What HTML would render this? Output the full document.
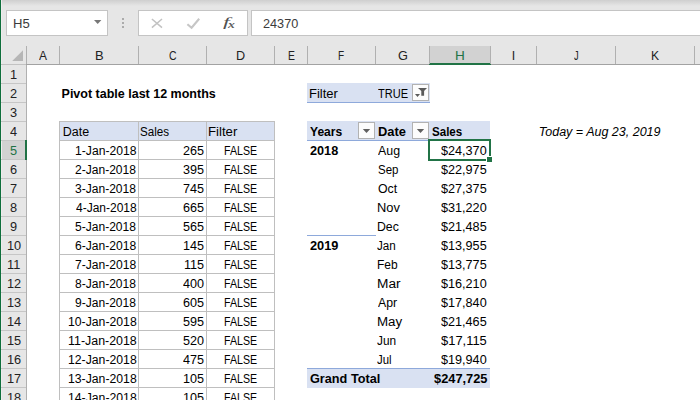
<!DOCTYPE html>
<html><head><meta charset="utf-8"><title>Pivot table last 12 months</title>
<style>
*{margin:0;padding:0;box-sizing:border-box}
html,body{width:700px;height:400px;overflow:hidden;background:#fff}
body{position:relative;font-family:"Liberation Sans",Arial,sans-serif;font-size:12.5px;color:#000;line-height:1}
.a{position:absolute}
.t{position:absolute;white-space:nowrap;line-height:20px;height:20px;transform-origin:0 0}
</style></head>
<body>
<div class="a" style="left:0;top:0;width:700px;height:65px;background:#e6e6e6"></div>
<div class="a" style="left:0;top:0;width:700px;height:6px;background:linear-gradient(#cfcfcf,#e6e6e6)"></div>
<div class="a" style="left:0;top:65px;width:27px;height:335px;background:#e6e6e6"></div>
<div class="a" style="left:0;top:0;width:1px;height:400px;background:#0f6f3c"></div>
<div class="a" style="left:1px;top:0;width:1px;height:400px;background:#efeced"></div>
<div class="a" style="left:6px;top:10px;width:102px;height:26px;background:#fff;border:1px solid #c4c4c4"></div>
<svg class="a" style="left:93px;top:19px" width="10" height="7" viewBox="0 0 10 7"><path d="M1 1 H8.4 L4.7 5 Z" fill="#777"/></svg>
<div class="a" style="left:122px;top:18px;width:2px;height:2px;background:#ababab"></div>
<div class="a" style="left:122px;top:22px;width:2px;height:2px;background:#ababab"></div>
<div class="a" style="left:122px;top:26px;width:2px;height:2px;background:#ababab"></div>
<div class="a" style="left:138px;top:10px;width:110px;height:26px;background:#fff;border:1px solid #c4c4c4"></div>
<svg class="a" style="left:148px;top:15px" width="18" height="16" viewBox="0 0 18 16"><path d="M3.9 4 L14 12.6 M14 4 L3.9 12.6" stroke="#c2c2c2" stroke-width="1.5" fill="none"/></svg>
<svg class="a" style="left:184px;top:15px" width="18" height="16" viewBox="0 0 18 16"><path d="M3.4 9.2 L7.6 12.8 L15.2 3.8" stroke="#c6c6c6" stroke-width="2.1" fill="none"/></svg>
<div class="a" style="left:251px;top:10px;width:460px;height:26px;background:#fff;border:1px solid #c4c4c4"></div>
<div class="a" style="left:429px;top:46px;width:61px;height:17px;background:#d2d2d2"></div>
<div class="a" style="left:1px;top:64px;width:25px;height:1px;background:#c2c2c2"></div>
<div class="a" style="left:26px;top:64px;width:674px;height:1px;background:#a2a2a2"></div>
<div class="a" style="left:429px;top:63px;width:62px;height:2px;background:#217346"></div>
<div class="a" style="left:26px;top:46px;width:1px;height:18px;background:#b0b0b0"></div>
<div class="a" style="left:59px;top:46px;width:1px;height:18px;background:#b0b0b0"></div>
<div class="a" style="left:138px;top:46px;width:1px;height:18px;background:#b0b0b0"></div>
<div class="a" style="left:206px;top:46px;width:1px;height:18px;background:#b0b0b0"></div>
<div class="a" style="left:274px;top:46px;width:1px;height:18px;background:#b0b0b0"></div>
<div class="a" style="left:307px;top:46px;width:1px;height:18px;background:#b0b0b0"></div>
<div class="a" style="left:375px;top:46px;width:1px;height:18px;background:#b0b0b0"></div>
<div class="a" style="left:429px;top:46px;width:1px;height:18px;background:#b0b0b0"></div>
<div class="a" style="left:490px;top:46px;width:1px;height:18px;background:#b0b0b0"></div>
<div class="a" style="left:536px;top:46px;width:1px;height:18px;background:#b0b0b0"></div>
<div class="a" style="left:615px;top:46px;width:1px;height:18px;background:#b0b0b0"></div>
<div class="a" style="left:694px;top:46px;width:1px;height:18px;background:#b0b0b0"></div>
<svg class="a" style="left:11px;top:49px" width="13" height="13" viewBox="0 0 13 13"><path d="M12 1.3 L12 12 L1.2 12 Z" fill="#b6b6b6"/></svg>
<div class="a" style="left:26px;top:65px;width:1px;height:335px;background:#b0b0b0"></div>
<div class="a" style="left:1px;top:83px;width:25px;height:1px;background:#c6c6c6"></div>
<div class="a" style="left:1px;top:102px;width:25px;height:1px;background:#c6c6c6"></div>
<div class="a" style="left:1px;top:121px;width:25px;height:1px;background:#c6c6c6"></div>
<div class="a" style="left:1px;top:140px;width:25px;height:1px;background:#c6c6c6"></div>
<div class="a" style="left:1px;top:159px;width:25px;height:1px;background:#c6c6c6"></div>
<div class="a" style="left:2px;top:141px;width:24px;height:18px;background:#d2d2d2"></div>
<div class="a" style="left:25px;top:140px;width:2px;height:20px;background:#217346"></div>
<div class="a" style="left:1px;top:178px;width:25px;height:1px;background:#c6c6c6"></div>
<div class="a" style="left:1px;top:197px;width:25px;height:1px;background:#c6c6c6"></div>
<div class="a" style="left:1px;top:216px;width:25px;height:1px;background:#c6c6c6"></div>
<div class="a" style="left:1px;top:235px;width:25px;height:1px;background:#c6c6c6"></div>
<div class="a" style="left:1px;top:254px;width:25px;height:1px;background:#c6c6c6"></div>
<div class="a" style="left:1px;top:273px;width:25px;height:1px;background:#c6c6c6"></div>
<div class="a" style="left:1px;top:292px;width:25px;height:1px;background:#c6c6c6"></div>
<div class="a" style="left:1px;top:311px;width:25px;height:1px;background:#c6c6c6"></div>
<div class="a" style="left:1px;top:330px;width:25px;height:1px;background:#c6c6c6"></div>
<div class="a" style="left:1px;top:349px;width:25px;height:1px;background:#c6c6c6"></div>
<div class="a" style="left:1px;top:368px;width:25px;height:1px;background:#c6c6c6"></div>
<div class="a" style="left:1px;top:387px;width:25px;height:1px;background:#c6c6c6"></div>
<div class="a" style="left:1px;top:406px;width:25px;height:1px;background:#c6c6c6"></div>
<div class="a" style="left:60px;top:122px;width:214px;height:18px;background:#d9e1f2"></div>
<div class="a" style="left:59px;top:121px;width:1px;height:279px;background:#bfbfbf"></div>
<div class="a" style="left:138px;top:121px;width:1px;height:279px;background:#bfbfbf"></div>
<div class="a" style="left:206px;top:121px;width:1px;height:279px;background:#bfbfbf"></div>
<div class="a" style="left:274px;top:121px;width:1px;height:279px;background:#bfbfbf"></div>
<div class="a" style="left:59px;top:121px;width:216px;height:1px;background:#bfbfbf"></div>
<div class="a" style="left:59px;top:140px;width:216px;height:1px;background:#bfbfbf"></div>
<div class="a" style="left:59px;top:159px;width:216px;height:1px;background:#bfbfbf"></div>
<div class="a" style="left:59px;top:178px;width:216px;height:1px;background:#bfbfbf"></div>
<div class="a" style="left:59px;top:197px;width:216px;height:1px;background:#bfbfbf"></div>
<div class="a" style="left:59px;top:216px;width:216px;height:1px;background:#bfbfbf"></div>
<div class="a" style="left:59px;top:235px;width:216px;height:1px;background:#bfbfbf"></div>
<div class="a" style="left:59px;top:254px;width:216px;height:1px;background:#bfbfbf"></div>
<div class="a" style="left:59px;top:273px;width:216px;height:1px;background:#bfbfbf"></div>
<div class="a" style="left:59px;top:292px;width:216px;height:1px;background:#bfbfbf"></div>
<div class="a" style="left:59px;top:311px;width:216px;height:1px;background:#bfbfbf"></div>
<div class="a" style="left:59px;top:330px;width:216px;height:1px;background:#bfbfbf"></div>
<div class="a" style="left:59px;top:349px;width:216px;height:1px;background:#bfbfbf"></div>
<div class="a" style="left:59px;top:368px;width:216px;height:1px;background:#bfbfbf"></div>
<div class="a" style="left:59px;top:387px;width:216px;height:1px;background:#bfbfbf"></div>
<div class="a" style="left:59px;top:406px;width:216px;height:1px;background:#bfbfbf"></div>
<div class="a" style="left:307px;top:83px;width:123px;height:19px;background:#d9e1f2"></div>
<div class="a" style="left:307px;top:102px;width:123px;height:1px;background:#8ea9db"></div>
<div class="a" style="left:412px;top:84px;width:17px;height:17px;background:#fcfcfc;border:1px solid #b2b2b2"></div>
<svg class="a" style="left:412px;top:84px" width="17" height="17" viewBox="0 0 17 17"><path d="M6 4 H15 L12.1 7 V11.7 H9.3 V7 Z" fill="#5a5a5a"/><path d="M3 10 H8 L5.5 12.9 Z" fill="#5a5a5a"/></svg>
<div class="a" style="left:307px;top:121px;width:183px;height:19px;background:#d9e1f2"></div>
<div class="a" style="left:307px;top:140px;width:183px;height:1px;background:#8ea9db"></div>
<div class="a" style="left:358px;top:122px;width:17px;height:17px;background:#fcfcfc;border:1px solid #b2b2b2"></div>
<svg class="a" style="left:358px;top:122px" width="17" height="17" viewBox="0 0 17 17"><path d="M4.8 7 H12.2 L8.5 11.1 Z" fill="#606060"/></svg>
<div class="a" style="left:412px;top:122px;width:17px;height:17px;background:#fcfcfc;border:1px solid #b2b2b2"></div>
<svg class="a" style="left:412px;top:122px" width="17" height="17" viewBox="0 0 17 17"><path d="M4.8 7 H12.2 L8.5 11.1 Z" fill="#606060"/></svg>
<div class="a" style="left:307px;top:235px;width:69px;height:1px;background:#8ea9db"></div>
<div class="a" style="left:307px;top:369px;width:183px;height:19px;background:#d9e1f2"></div>
<div class="a" style="left:307px;top:368px;width:183px;height:1px;background:#8ea9db"></div>
<div class="t" style="left:12.65px;top:13.90px;color:#3b3b3b;transform:scaleX(1.048);">H5</div>
<div class="t" style="left:262.69px;top:13.90px;color:#3b3b3b;transform:scaleX(1.013);">24370</div>
<div class="t" style="left:39.25px;top:46.00px;color:#222;transform:scaleX(0.958);">A</div>
<div class="t" style="left:94.66px;top:46.00px;color:#222;transform:scaleX(1.037);">B</div>
<div class="t" style="left:168.82px;top:46.00px;color:#222;transform:scaleX(0.839);">C</div>
<div class="t" style="left:235.89px;top:46.00px;color:#222;transform:scaleX(1.013);">D</div>
<div class="t" style="left:287.57px;top:46.00px;color:#222;transform:scaleX(0.830);">E</div>
<div class="t" style="left:338.40px;top:46.00px;color:#222;transform:scaleX(0.800);">F</div>
<div class="t" style="left:397.99px;top:46.00px;color:#222;transform:scaleX(1.018);">G</div>
<div class="t" style="left:455.31px;top:46.00px;color:#217346;transform:scaleX(1.086);">H</div>
<div class="t" style="left:511.65px;top:46.00px;color:#222;">I</div>
<div class="t" style="left:574.16px;top:46.00px;color:#222;transform:scaleX(0.740);">J</div>
<div class="t" style="left:650.83px;top:46.00px;color:#222;transform:scaleX(0.971);">K</div>
<div class="t" style="left:10.20px;top:65.00px;color:#222;transform:scaleX(1.020);">1</div>
<div class="t" style="left:10.46px;top:84.00px;color:#222;transform:scaleX(1.020);">2</div>
<div class="t" style="left:10.33px;top:103.00px;color:#222;transform:scaleX(1.020);">3</div>
<div class="t" style="left:10.46px;top:122.00px;color:#222;transform:scaleX(1.020);">4</div>
<div class="t" style="left:10.33px;top:141.00px;color:#217346;transform:scaleX(1.020);">5</div>
<div class="t" style="left:10.20px;top:160.00px;color:#222;transform:scaleX(1.020);">6</div>
<div class="t" style="left:10.33px;top:179.00px;color:#222;transform:scaleX(1.020);">7</div>
<div class="t" style="left:10.33px;top:198.00px;color:#222;transform:scaleX(1.020);">8</div>
<div class="t" style="left:10.46px;top:217.00px;color:#222;transform:scaleX(1.020);">9</div>
<div class="t" style="left:6.50px;top:236.00px;color:#222;transform:scaleX(1.020);">10</div>
<div class="t" style="left:7.14px;top:255.00px;color:#222;transform:scaleX(1.020);">11</div>
<div class="t" style="left:6.63px;top:274.00px;color:#222;transform:scaleX(1.020);">12</div>
<div class="t" style="left:6.63px;top:293.00px;color:#222;transform:scaleX(1.020);">13</div>
<div class="t" style="left:6.50px;top:312.00px;color:#222;transform:scaleX(1.020);">14</div>
<div class="t" style="left:6.63px;top:331.00px;color:#222;transform:scaleX(1.020);">15</div>
<div class="t" style="left:6.63px;top:350.00px;color:#222;transform:scaleX(1.020);">16</div>
<div class="t" style="left:6.63px;top:369.00px;color:#222;transform:scaleX(1.020);">17</div>
<div class="t" style="left:6.63px;top:388.00px;color:#222;transform:scaleX(1.020);">18</div>
<div class="t" style="left:61.55px;top:84.00px;font-weight:bold;">Pivot table last 12 months</div>
<div class="t" style="left:62.70px;top:122.00px;">Date</div>
<div class="t" style="left:140.30px;top:122.00px;transform:scaleX(0.930);">Sales</div>
<div class="t" style="left:208.34px;top:122.00px;transform:scaleX(1.057);">Filter</div>
<div class="t" style="left:74.93px;top:141.00px;transform:scaleX(0.972);">1-Jan-2018</div>
<div class="t" style="left:183.10px;top:141.00px;transform:scaleX(1.008);">265</div>
<div class="t" style="left:223.85px;top:141.00px;transform:scaleX(0.850);">FALSE</div>
<div class="t" style="left:75.42px;top:160.00px;transform:scaleX(0.964);">2-Jan-2018</div>
<div class="t" style="left:183.10px;top:160.00px;transform:scaleX(1.008);">395</div>
<div class="t" style="left:223.85px;top:160.00px;transform:scaleX(0.850);">FALSE</div>
<div class="t" style="left:75.42px;top:179.00px;transform:scaleX(0.964);">3-Jan-2018</div>
<div class="t" style="left:183.10px;top:179.00px;transform:scaleX(1.008);">745</div>
<div class="t" style="left:223.85px;top:179.00px;transform:scaleX(0.850);">FALSE</div>
<div class="t" style="left:75.66px;top:198.00px;transform:scaleX(0.960);">4-Jan-2018</div>
<div class="t" style="left:183.10px;top:198.00px;transform:scaleX(1.008);">665</div>
<div class="t" style="left:223.85px;top:198.00px;transform:scaleX(0.850);">FALSE</div>
<div class="t" style="left:75.42px;top:217.00px;transform:scaleX(0.964);">5-Jan-2018</div>
<div class="t" style="left:183.10px;top:217.00px;transform:scaleX(1.008);">565</div>
<div class="t" style="left:223.85px;top:217.00px;transform:scaleX(0.850);">FALSE</div>
<div class="t" style="left:75.17px;top:236.00px;transform:scaleX(0.968);">6-Jan-2018</div>
<div class="t" style="left:183.10px;top:236.00px;transform:scaleX(1.008);">145</div>
<div class="t" style="left:223.85px;top:236.00px;transform:scaleX(0.850);">FALSE</div>
<div class="t" style="left:75.17px;top:255.00px;transform:scaleX(0.968);">7-Jan-2018</div>
<div class="t" style="left:183.85px;top:255.00px;transform:scaleX(1.008);">115</div>
<div class="t" style="left:223.85px;top:255.00px;transform:scaleX(0.850);">FALSE</div>
<div class="t" style="left:75.42px;top:274.00px;transform:scaleX(0.964);">8-Jan-2018</div>
<div class="t" style="left:183.10px;top:274.00px;transform:scaleX(1.008);">400</div>
<div class="t" style="left:223.85px;top:274.00px;transform:scaleX(0.850);">FALSE</div>
<div class="t" style="left:75.42px;top:293.00px;transform:scaleX(0.964);">9-Jan-2018</div>
<div class="t" style="left:183.10px;top:293.00px;transform:scaleX(1.008);">605</div>
<div class="t" style="left:223.85px;top:293.00px;transform:scaleX(0.850);">FALSE</div>
<div class="t" style="left:67.62px;top:312.00px;transform:scaleX(0.979);">10-Jan-2018</div>
<div class="t" style="left:183.10px;top:312.00px;transform:scaleX(1.008);">595</div>
<div class="t" style="left:223.85px;top:312.00px;transform:scaleX(0.850);">FALSE</div>
<div class="t" style="left:67.61px;top:331.00px;transform:scaleX(0.993);">11-Jan-2018</div>
<div class="t" style="left:183.10px;top:331.00px;transform:scaleX(1.008);">520</div>
<div class="t" style="left:223.85px;top:331.00px;transform:scaleX(0.850);">FALSE</div>
<div class="t" style="left:67.62px;top:350.00px;transform:scaleX(0.979);">12-Jan-2018</div>
<div class="t" style="left:183.10px;top:350.00px;transform:scaleX(1.008);">475</div>
<div class="t" style="left:223.85px;top:350.00px;transform:scaleX(0.850);">FALSE</div>
<div class="t" style="left:67.62px;top:369.00px;transform:scaleX(0.979);">13-Jan-2018</div>
<div class="t" style="left:183.10px;top:369.00px;transform:scaleX(1.008);">105</div>
<div class="t" style="left:223.85px;top:369.00px;transform:scaleX(0.850);">FALSE</div>
<div class="t" style="left:67.62px;top:388.00px;transform:scaleX(0.979);">14-Jan-2018</div>
<div class="t" style="left:183.10px;top:388.00px;transform:scaleX(1.008);">105</div>
<div class="t" style="left:223.85px;top:388.00px;transform:scaleX(0.850);">FALSE</div>
<div class="t" style="left:309.36px;top:84.00px;transform:scaleX(1.042);">Filter</div>
<div class="t" style="left:378.38px;top:84.00px;transform:scaleX(0.884);">TRUE</div>
<div class="t" style="left:310.16px;top:122.00px;font-weight:bold;transform:scaleX(0.965);">Years</div>
<div class="t" style="left:377.83px;top:122.00px;font-weight:bold;transform:scaleX(1.031);">Date</div>
<div class="t" style="left:431.54px;top:122.00px;font-weight:bold;transform:scaleX(0.926);">Sales</div>
<div class="t" style="left:378.10px;top:141.00px;transform:scaleX(0.991);">Aug</div>
<div class="t" style="left:441.25px;top:141.00px;transform:scaleX(1.011);">$24,370</div>
<div class="t" style="left:377.61px;top:160.00px;transform:scaleX(0.919);">Sep</div>
<div class="t" style="left:441.25px;top:160.00px;transform:scaleX(1.011);">$22,975</div>
<div class="t" style="left:377.81px;top:179.00px;transform:scaleX(0.984);">Oct</div>
<div class="t" style="left:441.25px;top:179.00px;transform:scaleX(1.011);">$27,375</div>
<div class="t" style="left:377.37px;top:198.00px;transform:scaleX(1.029);">Nov</div>
<div class="t" style="left:441.25px;top:198.00px;transform:scaleX(1.011);">$31,220</div>
<div class="t" style="left:377.42px;top:217.00px;transform:scaleX(0.983);">Dec</div>
<div class="t" style="left:441.25px;top:217.00px;transform:scaleX(1.011);">$21,485</div>
<div class="t" style="left:377.37px;top:236.00px;transform:scaleX(0.932);">Jan</div>
<div class="t" style="left:441.25px;top:236.00px;transform:scaleX(1.011);">$13,955</div>
<div class="t" style="left:377.44px;top:255.00px;transform:scaleX(0.960);">Feb</div>
<div class="t" style="left:441.25px;top:255.00px;transform:scaleX(1.011);">$13,775</div>
<div class="t" style="left:377.30px;top:274.00px;transform:scaleX(1.096);">Mar</div>
<div class="t" style="left:441.25px;top:274.00px;transform:scaleX(1.011);">$16,210</div>
<div class="t" style="left:378.10px;top:293.00px;transform:scaleX(0.982);">Apr</div>
<div class="t" style="left:441.25px;top:293.00px;transform:scaleX(1.011);">$17,840</div>
<div class="t" style="left:377.33px;top:312.00px;transform:scaleX(1.067);">May</div>
<div class="t" style="left:441.25px;top:312.00px;transform:scaleX(1.011);">$21,465</div>
<div class="t" style="left:377.36px;top:331.00px;transform:scaleX(0.947);">Jun</div>
<div class="t" style="left:441.24px;top:331.00px;transform:scaleX(1.034);">$17,115</div>
<div class="t" style="left:377.37px;top:350.00px;transform:scaleX(0.913);">Jul</div>
<div class="t" style="left:441.25px;top:350.00px;transform:scaleX(1.011);">$19,940</div>
<div class="t" style="left:309.79px;top:141.00px;font-weight:bold;transform:scaleX(1.015);">2018</div>
<div class="t" style="left:309.79px;top:236.00px;font-weight:bold;transform:scaleX(1.024);">2019</div>
<div class="t" style="left:310.09px;top:369.00px;font-weight:bold;transform:scaleX(1.015);">Grand Total</div>
<div class="t" style="left:434.04px;top:369.00px;font-weight:bold;transform:scaleX(1.025);">$247,725</div>
<div class="t" style="left:538.75px;top:122.00px;font-style:italic;">Today = Aug 23, 2019</div>
<div class="t" style="left:222.55px;top:11.80px;font-size:13.4px;font-style:italic;font-family:'Liberation Serif',serif;color:#505050;transform:scaleX(1.800);">f</div>
<div class="t" style="left:228.40px;top:15.00px;font-size:9.8px;font-weight:bold;font-style:italic;font-family:'Liberation Serif',serif;color:#5e5e5e;transform:scaleX(1.389);">x</div>
<div class="a" style="left:428px;top:139px;width:63px;height:22px;border:2px solid #217346"></div>
<div class="a" style="left:486px;top:156px;width:7px;height:7px;background:#fff"></div>
<div class="a" style="left:487px;top:157px;width:5px;height:5px;background:#217346"></div>
</body></html>
